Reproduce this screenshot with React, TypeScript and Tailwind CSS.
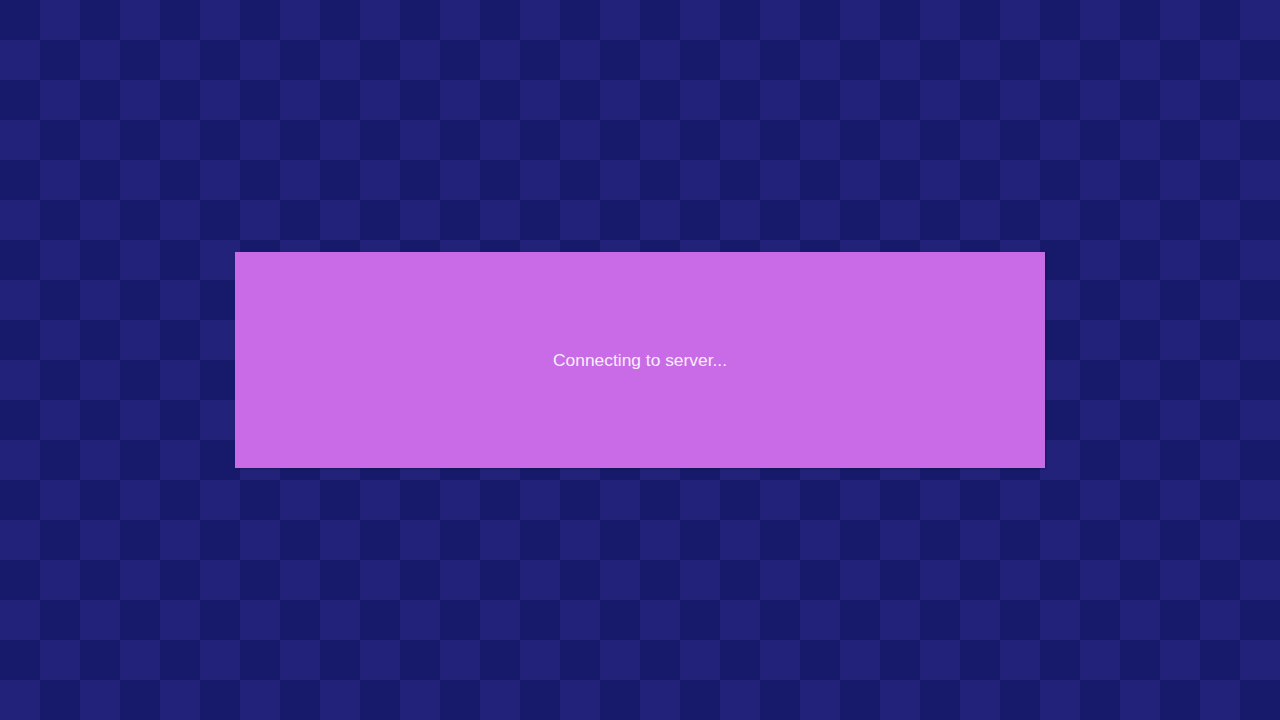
const App = () => {
  return (
    <div className="flex h-[720px] w-[1280px] items-center justify-center bg-[#171a6b] bg-[repeating-conic-gradient(#22227a_0_25%,#171a6b_0_50%)] bg-size-[80px_80px] font-['Liberation_Sans',Arial,sans-serif]">
      <div className="flex h-[216px] w-[810px] items-center justify-center bg-[#c96be6] shadow-[1px_1px_2px_rgba(0,0,0,0.25)]">
        <p className="text-[17.4px] text-[#f6eefa]">Connecting to server...</p>
      </div>
    </div>
  );
};

export default App;
